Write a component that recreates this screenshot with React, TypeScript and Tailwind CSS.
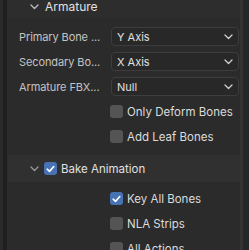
import React from "react";

function Chevron({ className = "" }: { className?: string }) {
  return (
    <svg width="9" height="6" viewBox="0 0 9 6" className={className}>
      <path d="M1 1 L4.5 4.5 L8 1" fill="none" stroke="currentColor" strokeWidth="1.3" strokeLinecap="round" strokeLinejoin="round" />
    </svg>
  );
}

function Check() {
  return (
    <svg width="9" height="8" viewBox="0 0 9 8">
      <path d="M1.2 4.2 L3.5 6.4 L7.8 1.5" fill="none" stroke="white" strokeWidth="1.6" strokeLinecap="round" strokeLinejoin="round" />
    </svg>
  );
}

function Box({ checked }: { checked?: boolean }) {
  return checked ? (
    <div className="w-[13px] h-[13px] rounded-[3px] bg-[#4772b3] flex items-center justify-center shrink-0">
      <Check />
    </div>
  ) : (
    <div className="w-[13px] h-[13px] rounded-[3px] bg-[#545454] shrink-0" />
  );
}

function Drop({ label, value }: { label: string; value: string }) {
  return (
    <div className="h-[19px] flex items-center shrink-0">
      <div className="w-[93px] pl-[12px] text-[#c4c4c4] whitespace-nowrap tracking-[-0.1px]">{label}</div>
      <div className="ml-[11px] w-[128px] h-[19px] rounded-[4px] bg-[#282828] border border-[#3d3d3d] flex items-center pl-[5px] pr-[5px] text-[#e0e0e0]">
        <span className="flex-1">{value}</span>
        <Chevron className="text-[#cfcfcf]" />
      </div>
    </div>
  );
}

function CheckRow({ label, checked }: { label: string; checked?: boolean }) {
  return (
    <div className="h-[19px] flex items-center pl-[103px] gap-[4px] text-[#dcdcdc] text-[11.5px] whitespace-nowrap shrink-0">
      <Box checked={checked} />
      <span>{label}</span>
    </div>
  );
}

export default function App() {
  return (
    <div className="w-[249px] h-[250px] overflow-hidden flex bg-[#2b2b2b] text-[11px] leading-[14px]" style={{ fontFamily: "Inter, 'Noto Sans', sans-serif" }}>
      <div className="w-[3px] bg-[#2a2a2a] shrink-0" />
      <div className="w-[4px] bg-[#1f1f1f] shrink-0" />
      <div className="flex-1 flex flex-col overflow-hidden">
        <div className="h-[18px] shrink-0 bg-[#2d2d2d] flex items-start pl-[23px] gap-[6px] text-[#e0e0e0] text-[12px]">
          <Chevron className="mt-[4px] text-[#bdbdbd]" />
          <span>Armature</span>
        </div>
        <div className="mt-[9px] shrink-0 flex flex-col gap-[6px]">
          <Drop label="Primary Bone ..." value="Y Axis" />
          <Drop label="Secondary Bo..." value="X Axis" />
          <Drop label="Armature FBX..." value="Null" />
          <CheckRow label="Only Deform Bones" />
          <CheckRow label="Add Leaf Bones" />
        </div>
        <div className="mt-[9px] shrink-0 ml-[1px] h-[27px] bg-[#303030] flex items-center pl-[22px] gap-[4px] text-[#e0e0e0] text-[11.5px]">
          <Chevron className="text-[#9a9a9a] mr-[1px]" />
          <Box checked />
          <span>Bake Animation</span>
        </div>
        <div className="mt-[7px] shrink-0 flex flex-col gap-[6px]">
          <CheckRow label="Key All Bones" checked />
          <CheckRow label="NLA Strips" />
          <CheckRow label="All Actions" />
        </div>
      </div>
      <div className="w-[3px] bg-[#333333] shrink-0" />
      <div className="w-[6px] bg-[#262626] shrink-0" />
    </div>
  );
}
